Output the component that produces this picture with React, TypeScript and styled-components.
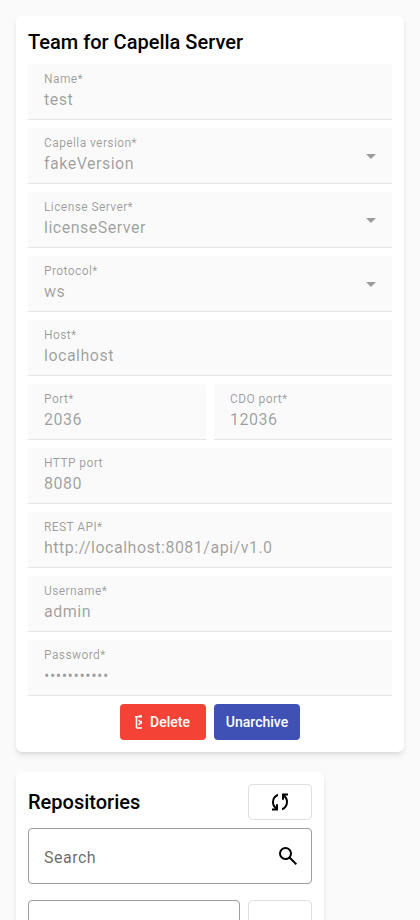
import React from "react";
import styled, { createGlobalStyle } from "styled-components";

const GlobalStyle = createGlobalStyle`
  * { box-sizing: border-box; }
  html { background: #fafafa; }
  body {
    margin: 0;
    height: 920px;
    overflow: hidden;
    font-family: Roboto, "Liberation Sans", sans-serif;
    color: #000;
    -webkit-font-smoothing: antialiased;
  }
`;

const Page = styled.main`
  display: flex;
  flex-direction: column;
  align-items: flex-start;
  gap: 20px;
  height: 920px;
  padding: 16px;
  overflow: hidden;
`;

const Card = styled.section<{ $width: number }>`
  flex: none;
  width: ${(p) => p.$width}px;
  padding: 12px;
  background: #fff;
  border-radius: 6px;
  box-shadow:
    0 4px 6px -1px rgba(0, 0, 0, 0.1),
    0 2px 4px -2px rgba(0, 0, 0, 0.1);
`;

const Title = styled.h2`
  margin: 0;
  font-size: 20px;
  font-weight: 500;
  line-height: 28px;
`;

const Form = styled.form`
  display: flex;
  flex-direction: column;
  gap: 8px;
  margin-top: 8px;
`;

const Row = styled.div`
  display: flex;
  gap: 8px;
`;

const Field = styled.div`
  display: flex;
  flex: 1;
  align-items: center;
  justify-content: space-between;
  height: 56px;
  padding: 0 16px;
  background: #fafafa;
  border-bottom: 1px solid #e6e6e6;
  border-radius: 4px 4px 0 0;
  color: rgba(0, 0, 0, 0.38);
`;

const FieldText = styled.div`
  align-self: flex-start;
  padding-top: 7px;
`;

const Label = styled.div`
  font-size: 12px;
  line-height: 16px;
  letter-spacing: 0.4px;
`;

const Value = styled.div`
  margin-top: 1px;
  font-size: 16px;
  line-height: 24px;
  letter-spacing: 0.5px;
`;

const SelectCaret = styled.span`
  width: 0;
  height: 0;
  margin-top: 1px;
  border: 5px solid transparent;
  border-top-color: rgba(0, 0, 0, 0.38);
  border-bottom: 0;
`;

const Actions = styled.div`
  display: flex;
  justify-content: center;
  gap: 8px;
`;

const ActionButton = styled.button<{ $color: string }>`
  display: flex;
  align-items: center;
  justify-content: center;
  width: 86px;
  height: 36px;
  padding: 0;
  border: 0;
  border-radius: 4px;
  background: ${(p) => p.$color};
  color: #fff;
  font: 500 14px/20px Roboto, sans-serif;
`;

const ClippedIcon = styled.span`
  display: flex;
  width: 10px;
  height: 18px;
  margin: 0 8px 0 -4px;
  overflow: hidden;
`;

const Header = styled.header`
  display: flex;
  align-items: center;
  justify-content: space-between;
  margin-bottom: 8px;
`;

const OutlineButton = styled.button`
  display: flex;
  align-items: center;
  justify-content: center;
  width: 64px;
  height: 36px;
  padding: 0;
  background: #fff;
  border: 1px solid #e0e0e0;
  border-radius: 4px;
`;

const OutlineBox = styled.div`
  display: flex;
  flex: 1;
  align-items: center;
  justify-content: space-between;
  height: 56px;
  padding: 2px 11px 0 15px;
  border: 1px solid #9e9e9e;
  border-radius: 4px;
  color: rgba(0, 0, 0, 0.6);
  font-size: 16px;
  letter-spacing: 0.5px;
`;

const NextRow = styled(Row)`
  margin-top: 16px;
`;

const Svg = styled.svg<{ $size: number }>`
  flex: none;
  width: ${(p) => p.$size}px;
  height: ${(p) => p.$size}px;
  fill: currentColor;
`;

const SyncIcon = styled(Svg)`
  margin-top: -1px;
  color: #000;
  transform: scaleY(1.07);
`;

const SearchIcon = styled(Svg)`
  margin-top: -2px;
  color: #000;
`;

const paths = {
  trash:
    "m376-300 104-104 104 104 56-56-104-104 104-104-56-56-104 104-104-104-56 56 104 104-104 104 56 56Zm-96 180q-33 0-56.5-23.5T200-200v-520h-40v-80h200v-40h240v40h200v80h-40v520q0 33-23.5 56.5T680-120H280Zm400-600H280v520h400v-520Z",
  sync: "M160-160v-80h110l-16-14q-52-46-73-105t-21-119q0-111 66.5-197.5T400-790v84q-72 26-116 88.5T240-478q0 45 17 87.5t53 78.5l10 10v-98h80v240H160Zm400-10v-84q72-26 116-88.5T720-482q0-45-17-87.5T650-648l-10-10v98h-80v-240h240v80H690l16 14q49 49 71.5 106.5T800-482q0 111-66.5 197.5T560-170Z",
  search:
    "M784-120 532-372q-30 24-69 38t-83 14q-109 0-184.5-75.5T120-580q0-109 75.5-184.5T380-840q109 0 184.5 75.5T640-580q0 44-14 83t-38 69l252 252-56 56ZM380-400q75 0 127.5-52.5T560-580q0-75-52.5-127.5T380-760q-75 0-127.5 52.5T200-580q0 75 52.5 127.5T380-400Z",
};

const VIEW_BOX = "0 -960 960 960";

type FieldData = { label: string; value: string; select?: boolean };

const rows: FieldData[][] = [
  [{ label: "Name*", value: "test" }],
  [{ label: "Capella version*", value: "fakeVersion", select: true }],
  [{ label: "License Server*", value: "licenseServer", select: true }],
  [{ label: "Protocol*", value: "ws", select: true }],
  [{ label: "Host*", value: "localhost" }],
  [
    { label: "Port*", value: "2036" },
    { label: "CDO port*", value: "12036" },
  ],
  [{ label: "HTTP port", value: "8080" }],
  [{ label: "REST API*", value: "http://localhost:8081/api/v1.0" }],
  [{ label: "Username*", value: "admin" }],
  [{ label: "Password*", value: "•••••••••••" }],
];

export default function App() {
  return (
    <>
      <GlobalStyle />
      <Page>
        <Card $width={388}>
          <Title>Team for Capella Server</Title>
          <Form>
            {rows.map((row) => (
              <Row key={row[0].label}>
                {row.map((f) => (
                  <Field key={f.label}>
                    <FieldText>
                      <Label>{f.label}</Label>
                      <Value>{f.value}</Value>
                    </FieldText>
                    {f.select && <SelectCaret />}
                  </Field>
                ))}
              </Row>
            ))}
            <Actions>
              <ActionButton type="button" $color="#f44336">
                <ClippedIcon>
                  <Svg $size={18} viewBox={VIEW_BOX}>
                    <path d={paths.trash} />
                  </Svg>
                </ClippedIcon>
                Delete
              </ActionButton>
              <ActionButton type="button" $color="#3f51b5">
                Unarchive
              </ActionButton>
            </Actions>
          </Form>
        </Card>
        <Card $width={308}>
          <Header>
            <Title>Repositories</Title>
            <OutlineButton type="button">
              <SyncIcon $size={24} viewBox={VIEW_BOX}>
                <path d={paths.sync} />
              </SyncIcon>
            </OutlineButton>
          </Header>
          <Row>
            <OutlineBox>
              Search
              <SearchIcon $size={24} viewBox={VIEW_BOX}>
                <path d={paths.search} />
              </SearchIcon>
            </OutlineBox>
          </Row>
          <NextRow>
            <OutlineBox />
            <OutlineButton type="button" />
          </NextRow>
        </Card>
      </Page>
    </>
  );
}
